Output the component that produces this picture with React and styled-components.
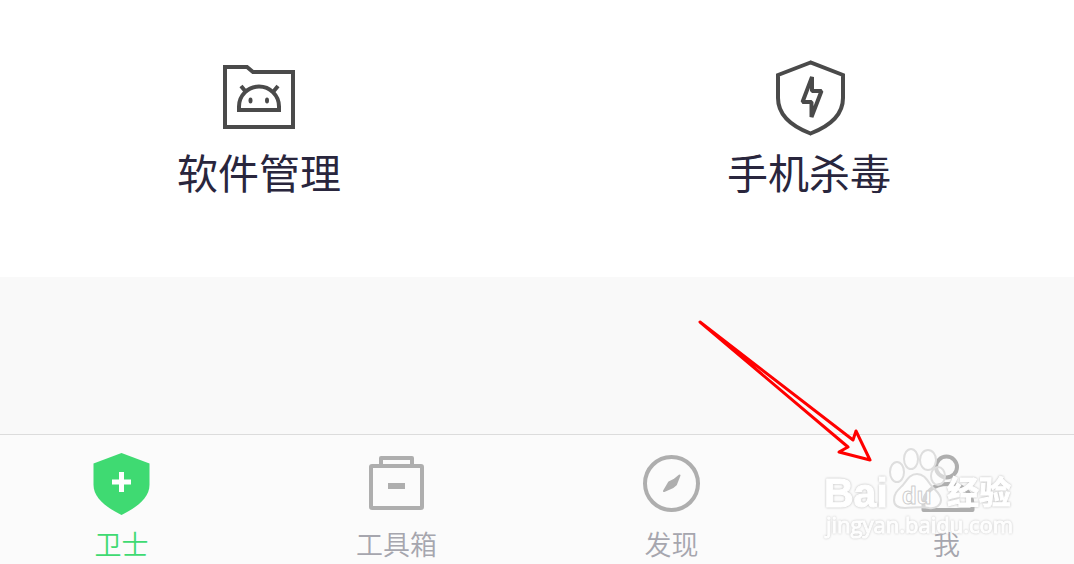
import { useState } from "react";
import styled, { createGlobalStyle } from "styled-components";

const GlobalStyle = createGlobalStyle`
  body {
    margin: 0;
    font-family: "Noto Sans CJK SC", sans-serif;
  }
`;

const SPage = styled.div`
  position: relative;
  display: flex;
  flex-direction: column;
  min-height: 100vh;
  overflow: hidden;
  background-color: #f9f9f9;
`;

const STiles = styled.main`
  display: grid;
  grid-template-columns: 1fr 1fr;
  column-gap: 32px;
  padding: 58px 6px 81px 0;
  background-color: #fff;
`;

const STile = styled.button`
  display: flex;
  flex-direction: column;
  align-items: center;
  gap: 8px;
  padding: 0;
  border: none;
  background: none;
  color: #29263d;
  font-family: inherit;
  font-size: 41px;
  line-height: 50px;
  cursor: pointer;
`;

const STileIcon = styled.svg`
  width: 80px;
  height: 80px;
  fill: none;
  stroke: #4a4a4a;
  stroke-width: 4;
`;

const STabBar = styled.nav`
  display: grid;
  grid-template-columns: repeat(4, 1fr);
  column-gap: 32px;
  margin-top: auto;
  padding: 17px 6px 4px 0;
  border-top: 1px solid #dcdcdc;
  background-color: #fbfbfb;
`;

const STab = styled.button`
  display: flex;
  flex-direction: column;
  align-items: center;
  gap: 12px;
  padding: 0;
  border: none;
  background: none;
  color: ${({ $active }) => ($active ? "#3fda72" : "#a6a6ae")};
  font-family: inherit;
  font-size: 27px;
  font-weight: 350;
  line-height: 32px;
  cursor: pointer;
`;

const STabIcon = styled.svg`
  width: 63px;
  height: 64px;
  fill: none;
  stroke: ${({ $active }) => ($active ? "#3fda72" : "#aeaeae")};
  stroke-width: 4;
`;

const SArrow = styled.svg`
  position: absolute;
  right: 194px;
  bottom: 94px;
  width: 190px;
  height: 160px;
  fill: none;
  stroke: #f00;
  stroke-width: 3;
  stroke-linejoin: round;
  pointer-events: none;
`;

const SWatermark = styled.svg`
  position: absolute;
  right: 54px;
  bottom: 20px;
  width: 200px;
  height: 100px;
  pointer-events: none;
`;

const SPaw = styled.g`
  fill: rgba(255, 255, 255, 0.5);
  stroke: #dedede;
  stroke-width: 2;
`;

const SLogoText = styled.text`
  font-family: "Liberation Sans", "Noto Sans CJK SC", sans-serif;
  font-size: ${({ $size }) => $size}px;
  font-weight: 700;
  fill: #fff;
  stroke: ${({ $outlined }) => ($outlined ? "#cecece" : "#fff")};
  stroke-width: 1;
  stroke-linejoin: round;
  filter: ${({ $outlined }) => ($outlined ? "none" : "drop-shadow(0 0 1px #b8b8b8)")};
`;

const SUrlText = styled.text`
  font-family: "Open Sans", sans-serif;
  font-size: 22px;
  fill: #fff;
  stroke: #fff;
  stroke-width: 1;
  opacity: 0.9;
  filter: drop-shadow(0 0 1px #c0c0c0);
`;

const FolderIcon = () => (
  <STileIcon viewBox="0 0 80 80" aria-hidden="true">
    <path d="M6 9H28L34 14H74V69H6Z" />
    <path d="M20 52V48.500a20 20 0 0 1 40 0V52Z" />
    <path d="M22 28L27 34M59 28L54 34" />
    <ellipse cx="31.500" cy="42.500" rx="2" ry="3" fill="#4a4a4a" stroke="none" />
    <ellipse cx="48" cy="42.500" rx="2" ry="3" fill="#4a4a4a" stroke="none" />
  </STileIcon>
);

const BoltIcon = () => (
  <STileIcon viewBox="0 0 80 80" aria-hidden="true">
    <path d="M41.500 4.500L9 17V40C9 57 22 68 41.500 75.500C61 68 74 57 74 40V17Z" />
    <path d="M43 19V33H52.500L42.500 59V44H33.500Z" strokeLinejoin="bevel" />
  </STileIcon>
);

const GuardIcon = (
  <>
    <path
      d="M31.500 1L59.500 11.500V33C59.500 45 48 55 31.500 63C15 55 3.500 45 3.500 33V11.500Z"
      fill="#3fda72"
      stroke="none"
    />
    <path d="M22 30H41M31.500 20V40" stroke="#fff" strokeWidth="5" />
  </>
);

const ToolboxIcon = (
  <>
    <rect x="6" y="14" width="51" height="42" rx="1" />
    <path d="M16 14V6H47V14" strokeLinejoin="round" />
    <path d="M23 34H40" strokeWidth="6" />
  </>
);

const CompassIcon = (
  <>
    <circle cx="31.500" cy="31.500" r="26.500" />
    <path
      d="M24 39L29 30.500L34 28L39.500 23.500L36 32.500L33 35Z"
      fill="#aeaeae"
      strokeWidth="2"
      strokeLinejoin="round"
    />
  </>
);

const MeIcon = (
  <>
    <circle cx="31.500" cy="15" r="10.500" />
    <path d="M8.500 58V52C9 40 19 32 33 32S57 40 57.500 52V58Z" strokeLinejoin="round" />
  </>
);

const tabs = [
  { id: "guard", label: "卫士", icon: GuardIcon },
  { id: "toolbox", label: "工具箱", icon: ToolboxIcon },
  { id: "discover", label: "发现", icon: CompassIcon },
  { id: "me", label: "我", icon: MeIcon },
];

const Watermark = () => (
  <SWatermark viewBox="0 0 200 100">
    <SPaw>
      <ellipse cx="77" cy="28" rx="7" ry="10" />
      <ellipse cx="91" cy="15" rx="7" ry="10" />
      <ellipse cx="108" cy="16" rx="8" ry="10" />
      <ellipse cx="118" cy="32" rx="7" ry="9" />
      <path d="M97 30C90 30 87 36 83 41C78 46 74 49 74 56C74 62 79 64 85 64C93 64 101 62 109 64C116 65 121 61 121 56C121 49 114 46 110 40C106 34 103 30 97 30Z" />
    </SPaw>
    <SLogoText x="4" y="63" $size={41}>Bai</SLogoText>
    <SLogoText x="82" y="60" $size={24} $outlined>du</SLogoText>
    <SLogoText x="127" y="60" $size={32}>经验</SLogoText>
    <SUrlText x="6" y="89">jingyan.baidu.com</SUrlText>
  </SWatermark>
);

const App = () => {
  const [activeTab, setActiveTab] = useState("guard");

  return (
    <>
      <GlobalStyle />
      <SPage>
        <STiles>
          <STile type="button">
            <FolderIcon />
            软件管理
          </STile>
          <STile type="button">
            <BoltIcon />
            手机杀毒
          </STile>
        </STiles>

        <STabBar>
          {tabs.map((tab) => (
            <STab
              key={tab.id}
              type="button"
              $active={tab.id === activeTab}
              onClick={() => setActiveTab(tab.id)}
            >
              <STabIcon viewBox="0 0 63 64" $active={tab.id === activeTab} aria-hidden="true">
                {tab.icon}
              </STabIcon>
              {tab.label}
            </STab>
          ))}
        </STabBar>

        <SArrow viewBox="0 0 190 160" aria-hidden="true">
          <path d="M10 12L163 130L166 121L180 150L149 142L158 137Z" />
        </SArrow>
        <Watermark />
      </SPage>
    </>
  );
};

export default App;
